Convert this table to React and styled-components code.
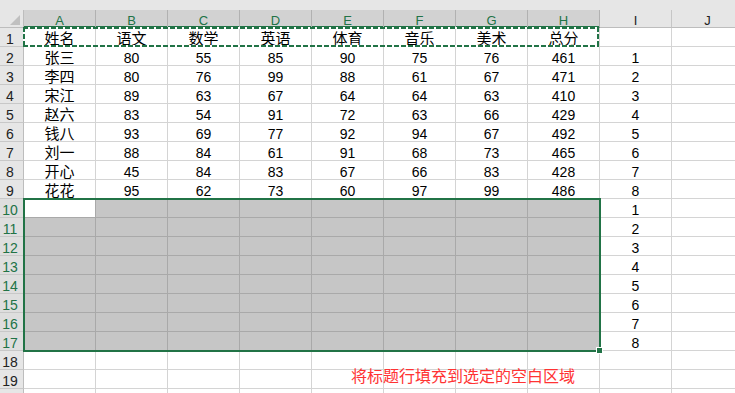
import styled, { createGlobalStyle } from "styled-components";

const GREEN = "#217346";

const COLS = ["A", "B", "C", "D", "E", "F", "G", "H", "I", "J"];
const HEAD = ["姓名", "语文", "数学", "英语", "体育", "音乐", "美术", "总分"];
const DATA = [
  ["张三", 80, 55, 85, 90, 75, 76, 461],
  ["李四", 80, 76, 99, 88, 61, 67, 471],
  ["宋江", 89, 63, 67, 64, 64, 63, 410],
  ["赵六", 83, 54, 91, 72, 63, 66, 429],
  ["钱八", 93, 69, 77, 92, 94, 67, 492],
  ["刘一", 88, 84, 61, 91, 68, 73, 465],
  ["开心", 45, 84, 83, 67, 66, 83, 428],
  ["花花", 95, 62, 73, 60, 97, 99, 486],
];

// values of one sheet row (1-based), ten columns A..J
const rowValues = (r) => {
  if (r === 1) return [...HEAD, "", ""];
  if (r >= 2 && r <= 9) return [...DATA[r - 2], r - 1, ""];
  if (r >= 10 && r <= 17) return ["", "", "", "", "", "", "", "", r - 9, ""];
  return Array(10).fill("");
};

const isSelected = (r, c) => r >= 10 && r <= 17 && c <= 7;

const GlobalStyle = createGlobalStyle`
  html, body {
    margin: 0;
    padding: 0;
    background: #fff;
    overflow: hidden;
  }
  body {
    font-family: "Liberation Sans", "Noto Sans CJK SC", sans-serif;
  }
`;

const Page = styled.div`
  width: 735px;
  height: 393px;
  overflow: hidden;
  display: flex;
  flex-direction: column;
`;

const TopBand = styled.div`
  height: 10px;
  flex: none;
  background: #e6e6e6;
`;

const Sheet = styled.div`
  position: relative;
  display: grid;
  grid-template-columns: 24px repeat(10, 72px);
  grid-template-rows: 18px repeat(20, 19px);
`;

const Corner = styled.div`
  grid-row: 1;
  grid-column: 1;
  position: relative;
  box-sizing: border-box;
  background: #e6e6e6;
  border-right: 1px solid #bdbdbd;
  border-bottom: 1px solid #bdbdbd;
  &::after {
    content: "";
    position: absolute;
    right: 3px;
    bottom: 2px;
    width: 0;
    height: 0;
    border-left: 10px solid transparent;
    border-bottom: 10px solid #c0c0c0;
  }
`;

const ColHead = styled.div`
  grid-row: 1;
  grid-column: ${(p) => p.$col};
  box-sizing: border-box;
  display: flex;
  align-items: flex-end;
  justify-content: center;
  background: ${(p) => (p.$sel ? "#d2d2d2" : "#e6e6e6")};
  border-right: 1px solid ${(p) => (p.$sel ? "#b1b1b1" : "#c6c6c6")};
  border-bottom: 1px solid ${(p) => (p.$sel ? GREEN : "#bdbdbd")};
  box-shadow: ${(p) => (p.$sel ? `inset 0 -1px 0 ${GREEN}` : "none")};
  color: ${(p) => (p.$sel ? GREEN : "#222")};
  font-size: 13px;
  line-height: 13px;
`;

const RowHead = styled.div`
  grid-row: ${(p) => p.$row};
  grid-column: 1;
  box-sizing: border-box;
  display: flex;
  align-items: flex-end;
  justify-content: center;
  padding-right: 3px;
  background: ${(p) => (p.$sel ? "#dedede" : "#e6e6e6")};
  border-right: 1px solid ${(p) => (p.$sel ? GREEN : "#bdbdbd")};
  border-bottom: 1px solid #c8c8c8;
  color: ${(p) => (p.$sel ? GREEN : "#222")};
  font-size: 14px;
  line-height: 14px;
`;

const Cell = styled.div`
  grid-row: ${(p) => p.$row};
  grid-column: ${(p) => p.$col};
  box-sizing: border-box;
  display: flex;
  align-items: flex-end;
  justify-content: center;
  white-space: nowrap;
  background: ${(p) => (p.$sel && !p.$active ? "#c6c6c6" : "#fff")};
  border-right: 1px solid ${(p) => (p.$sel ? "#a9a9a9" : "#d4d4d4")};
  border-bottom: 1px solid ${(p) => (p.$sel ? "#a9a9a9" : "#d4d4d4")};
  color: #000;
  font-size: ${(p) => (p.$cjk ? "15px" : "14px")};
  line-height: 14px;
`;

const dash = (dir) =>
  `repeating-linear-gradient(${dir}, ${GREEN} 0 5px, #fff 5px 7px)`;

const CopyFrame = styled.div`
  grid-column: 2 / 10;
  grid-row: 2 / 3;
  margin: -1px 1px 0 -1px;
  z-index: 2;
  pointer-events: none;
  background:
    ${dash("90deg")} left top / 100% 2px no-repeat,
    ${dash("90deg")} left bottom / 100% 2px no-repeat,
    ${dash("180deg")} left top / 2px 100% no-repeat,
    ${dash("180deg")} right top / 2px 100% no-repeat;
`;

const SelectFrame = styled.div`
  grid-column: 2 / 10;
  grid-row: 11 / 19;
  margin: -1px -1px -1px -1px;
  position: relative;
  z-index: 2;
  border: 2px solid ${GREEN};
  pointer-events: none;
`;

const FillHandle = styled.span`
  position: absolute;
  right: -4px;
  bottom: -4px;
  width: 5px;
  height: 5px;
  background: ${GREEN};
  border: 1px solid #fff;
`;

const Note = styled.div`
  position: absolute;
  left: 351px;
  top: 357px;
  z-index: 3;
  color: #ff3333;
  font-family: "Noto Sans CJK SC", sans-serif;
  font-size: 16px;
  line-height: 16px;
  white-space: nowrap;
`;

export default function App() {
  const rows = Array.from({ length: 20 }, (_, i) => i + 1);
  return (
    <Page>
      <GlobalStyle />
      <TopBand />
      <Sheet>
        <Corner />
        {COLS.map((c, i) => (
          <ColHead key={c} $col={i + 2} $sel={i <= 7}>
            {c}
          </ColHead>
        ))}
        {rows.map((r) => {
          const vals = rowValues(r);
          return [
            <RowHead key={`h${r}`} $row={r + 1} $sel={r >= 10 && r <= 17}>
              {r < 20 ? r : ""}
            </RowHead>,
            ...vals.map((v, c) => (
              <Cell
                key={`${r}-${c}`}
                $row={r + 1}
                $col={c + 2}
                $sel={isSelected(r, c)}
                $active={r === 10 && c === 0}
                $cjk={typeof v === "string" && v !== ""}
              >
                {v}
              </Cell>
            )),
          ];
        })}
        <CopyFrame />
        <SelectFrame>
          <FillHandle />
        </SelectFrame>
        <Note>将标题行填充到选定的空白区域</Note>
      </Sheet>
    </Page>
  );
}
